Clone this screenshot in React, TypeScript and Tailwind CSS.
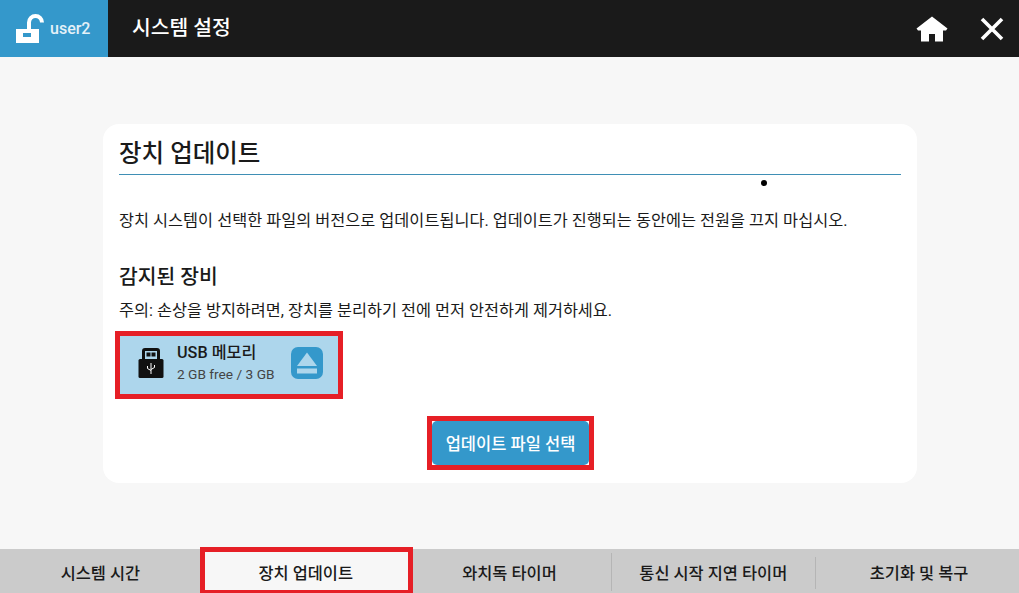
const font = 'font-["Roboto","Noto_Sans_CJK_KR",sans-serif]';

const tabs = ['시스템 시간', '장치 업데이트', '와치독 타이머', '통신 시작 지연 타이머', '초기화 및 복구'];

function UnlockIcon() {
  return (
    <svg width="29" height="30" viewBox="0 0 29 30" aria-hidden="true">
      <rect x="1" y="15" width="23" height="14" fill="#fff" />
      <rect x="8" y="19" width="8" height="4" fill="#3498cb" />
      <path d="M14 15V8.500a6.500 6.500 0 0 1 13 0" fill="none" stroke="#fff" strokeWidth="4" />
    </svg>
  );
}

function HomeIcon() {
  return (
    <svg width="32" height="26" viewBox="0 0 32 26" aria-hidden="true">
      <path
        fill="#fff"
        fillRule="evenodd"
        d="M16 0.500 31.500 12.500 30 14.500H27V25.500H19V18H13V25.500H5V14.500H2L0.500 12.500Z"
      />
    </svg>
  );
}

function CloseIcon() {
  return (
    <svg width="24" height="24" viewBox="0 0 24 24" aria-hidden="true">
      <path d="M2 2 22 22M22 2 2 22" stroke="#fff" strokeWidth="3.600" fill="none" />
    </svg>
  );
}

function UsbIcon() {
  return (
    <svg width="26" height="30" viewBox="0 0 26 30" aria-hidden="true">
      <path d="M5.500 13V3a1.500 1.500 0 0 1 1.500-1.500h12a1.500 1.500 0 0 1 1.500 1.500V13" fill="none" stroke="#111" strokeWidth="3" />
      <rect x="8.500" y="4.500" width="4" height="4" fill="#111" />
      <rect x="13.500" y="4.500" width="4" height="4" fill="#111" />
      <rect x="0.500" y="11" width="25" height="19" rx="1.500" fill="#111" />
      <path d="M13 15V26M9.500 18V20.500L13 22.500M16.500 17V19.500L13 21.500" fill="none" stroke="#fff" strokeWidth="1" />
    </svg>
  );
}

function EjectIcon() {
  return (
    <div className="flex h-[32px] w-[32px] items-center justify-center rounded-[7px] bg-[#3498cb]">
      <svg width="20" height="22" viewBox="0 0 20 22" aria-hidden="true">
        <path d="M10 0.500 20 14H0Z" fill="#add6ec" />
        <rect x="0" y="16.500" width="20" height="5" fill="#add6ec" />
      </svg>
    </div>
  );
}

export default function App() {
  return (
    <div className={`${font} relative flex h-[593px] w-[1019px] flex-col overflow-hidden bg-[#f7f7f7] text-[#1a1a1a]`}>
      <header className="flex h-[57px] shrink-0 items-center bg-[#1a1a1a]">
        <div className="flex h-full w-[108px] items-center gap-[6px] bg-[#3498cb] pl-[15px] pt-[1px]">
          <UnlockIcon />
          <span className="text-[16px] font-medium text-[#e4f1f8]">user2</span>
        </div>
        <h1 className="ml-[24px] text-[20.400px] font-medium text-white">시스템 설정</h1>
        <div className="ml-auto flex items-center gap-[32px] pr-[15px]">
          <HomeIcon />
          <CloseIcon />
        </div>
      </header>

      <main className="flex min-h-0 flex-1 flex-col pl-[103px] pr-[102px] pt-[67px]">
        <section className="relative h-[359px] rounded-[16px] bg-white px-[16px]">
          <div className="h-[51px] border-b border-[#3f8fb5] pt-[12px]">
            <h2 className="text-[24.500px] leading-[36px] font-medium">장치 업데이트</h2>
          </div>
          <p className="mt-[35px] text-[16.320px] leading-[22px]">
            장치 시스템이 선택한 파일의 버전으로 업데이트됩니다. 업데이트가 진행되는 동안에는 전원을 끄지 마십시오.
          </p>
          <h3 className="mt-[31px] text-[20.400px] leading-[28px] font-medium">감지된 장비</h3>
          <p className="mt-[9px] text-[16.300px] leading-[22px]">
            주의: 손상을 방지하려면, 장치를 분리하기 전에 먼저 안전하게 제거하세요.
          </p>
          <div className="mt-[14px] ml-[1px] flex h-[58px] w-[218px] items-center bg-[#add6ec] pb-[4px] pl-[18px] outline-[5px] outline-[#e61f26]">
            <UsbIcon />
            <div className="ml-[13px] pb-[1px]">
              <div className="text-[16.200px] leading-[20px] font-medium">USB 메모리</div>
              <div className="mt-[2px] text-[13.700px] leading-[18px] text-[#444]">2 GB free / 3 GB</div>
            </div>
            <div className="ml-[16px]">
              <EjectIcon />
            </div>
          </div>
          <div className="mt-[22px] flex justify-center">
            <div className="ml-[1px] border-[5px] border-[#e61f26] bg-white">
              <button
                type="button"
                className="block h-[44px] w-[157px] rounded-[5px] bg-[#3498cb] pt-[4px] text-[16.500px] font-medium text-white"
              >
                업데이트 파일 선택
              </button>
            </div>
          </div>
        </section>
      </main>

      <nav className="grid h-[44px] shrink-0 grid-cols-5 bg-[#cbcbcb]">
        {tabs.map((tab, i) => (
          <div
            key={tab}
            className={`relative flex h-full items-center justify-center pt-[7px] text-[16.400px] font-medium ${i === 1 ? 'bg-[#f7f7f7]' : ''} ${i === 0 ? 'pr-[3px]' : ''} ${i === 4 ? 'pl-[4px]' : ''}`}
          >
            {tab}
            {i === 1 && (
              <div className="absolute top-[-2px] right-[-5px] bottom-0 left-[-4px] border-[5px] border-b-[3px] border-[#e61f26]" />
            )}
            {i === 2 && <div className="absolute top-[4px] right-[-1px] bottom-[2px] w-[1px] bg-[#b5b5b5]" />}
            {i === 3 && <div className="absolute top-[8px] right-[-1px] bottom-[4px] w-[1px] bg-[#b5b5b5]" />}
          </div>
        ))}
      </nav>

      <div className="absolute top-[180px] left-[761px] h-[6px] w-[6px] rounded-full bg-black" />
    </div>
  );
}
